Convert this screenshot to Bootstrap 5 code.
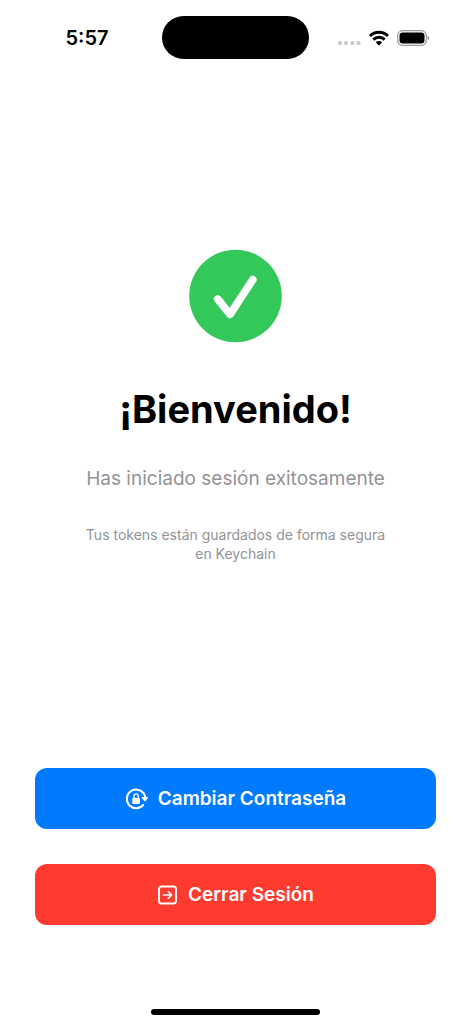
<!DOCTYPE html>
<html lang="es">
<head>
<meta charset="utf-8">
<meta name="viewport" content="width=device-width, initial-scale=1">
<title>Bienvenido</title>
<link href="https://cdn.jsdelivr.net/npm/bootstrap@5.3.0/dist/css/bootstrap.min.css" rel="stylesheet">
<style>
  body { font-family: Inter, "Liberation Sans", sans-serif; background: #fff; color: #000; }
  .status-bar { display: grid; grid-template-columns: 1fr 147px 1fr; padding-top: 16px; }
  .status-time { font-size: 20px; line-height: 24px; font-weight: 600; padding-right: 12px; padding-left: 24px; }
  .island { height: 43px; border-radius: 22px; background: #000; }
  .status-icons { gap: 8px; padding-left: 28px; }
  .welcome { padding: 0 80px; }
  .welcome-title { font-size: 38px; line-height: 48px; font-weight: 700; margin: 42px 0 34px; white-space: nowrap; }
  .welcome-lead { font-size: 19px; line-height: 24px; margin-bottom: 34px; white-space: nowrap; }
  .welcome-note { font-size: 14px; line-height: 19px; }
  .welcome-lead, .welcome-note { color: #939398; }
  .actions { gap: 35px; padding: 0 35px 84px; }
  .action-btn { --bs-btn-color: #fff; --bs-btn-hover-color: #fff; --bs-btn-active-color: #fff;
    --bs-btn-border-width: 0; --bs-btn-border-radius: 12px; --bs-btn-font-size: 19px; --bs-btn-font-weight: 600;
    --bs-btn-line-height: 24px; height: 61px; gap: 9px; }
  .action-change { --bs-btn-bg: #007aff; --bs-btn-hover-bg: #0070eb; --bs-btn-active-bg: #0066d6; }
  .action-logout { --bs-btn-bg: #ff3b30; --bs-btn-hover-bg: #eb362c; --bs-btn-active-bg: #d63128; }
  .home-bar { width: 36%; height: 6px; border-radius: 3px; background: #000; margin: 0 auto 9px; }
</style>
</head>
<body class="d-flex flex-column min-vh-100">

<header class="status-bar align-items-center">
  <div class="status-time text-center">5:57</div>
  <div class="island"></div>
  <div class="status-icons d-flex align-items-center">
    <svg width="24" height="14" viewBox="0 0 24 14" fill="#cbcbcc" aria-hidden="true">
      <rect x="1" y="10" width="4" height="4" rx="1.5"/><rect x="7" y="10" width="4" height="4" rx="1.5"/>
      <rect x="13.500" y="10" width="4" height="4" rx="1.5"/><rect x="19.500" y="10" width="4" height="4" rx="1.5"/>
    </svg>
    <svg width="20" height="16" viewBox="0 0 20 16" aria-label="Wi-Fi">
      <g fill="none" stroke="#000" stroke-width="2.900">
        <path d="M1 6a12.800 12.800 0 0 1 18 0"/>
        <path d="M4.300 9.600a8.100 8.100 0 0 1 11.400 0"/>
      </g>
      <path d="M6.800 12.300a4.600 4.600 0 0 1 6.400 0L10 15.700z"/>
    </svg>
    <svg width="33" height="16" viewBox="0 0 33 16" aria-label="Batería">
      <rect x=".7" y=".7" width="28.600" height="14.600" rx="4.800" fill="none" stroke="#999" stroke-width="1.200"/>
      <rect x="2.500" y="2.500" width="25" height="11" rx="3.200"/>
      <path d="M30.600 5.500c2 .8 2 4.200 0 5z" fill="#999"/>
    </svg>
  </div>
</header>

<main class="flex-grow-1 d-flex flex-column">
  <section class="welcome flex-grow-1 d-flex flex-column align-items-center justify-content-center text-center pb-3">
    <svg width="93" height="94" viewBox="0 0 94 94" aria-hidden="true">
      <circle cx="47" cy="47" r="46.800" fill="#34c759"/>
      <path d="M29 50 41.500 65.500 64.500 30.500" fill="none" stroke="#fff" stroke-width="7.800" stroke-linecap="round" stroke-linejoin="round"/>
    </svg>
    <h1 class="welcome-title">¡Bienvenido!</h1>
    <p class="welcome-lead">Has iniciado sesión exitosamente</p>
    <p class="welcome-note mb-0">Tus tokens están guardados de forma segura en Keychain</p>
  </section>

  <section class="actions d-flex flex-column">
    <button type="button" class="btn action-btn action-change d-flex align-items-center justify-content-center">
      <svg width="24" height="22" viewBox="0 0 24 22" aria-hidden="true">
        <path d="M18.700 5.500A9.300 9.300 0 1 0 18.200 17" fill="none" stroke="#fff" stroke-width="2" stroke-linecap="round"/>
        <path d="M18.300 4.800q1.600 2 1.900 4.400" fill="none" stroke="#fff" stroke-width="2"/>
        <path d="M16.800 9h6q.8 0 .3.700l-2.600 3.500q-.5.600-1 0l-2.900-3.500q-.5-.7.200-.7z" fill="#fff"/>
        <rect x="7.300" y="9.800" width="7.600" height="6.200" rx="1" fill="#fff"/>
        <path d="M8.900 10.200V8.300a2.200 2.500 0 0 1 4.400 0v1.900" fill="none" stroke="#fff" stroke-width="1.300"/>
      </svg>
      Cambiar Contraseña
    </button>
    <button type="button" class="btn action-btn action-logout d-flex align-items-center justify-content-center">
      <svg width="22" height="20" viewBox="0 0 22 20" aria-hidden="true" fill="none" stroke="#fff" stroke-linecap="round" stroke-linejoin="round">
        <rect x="2" y="1.500" width="17" height="17" rx="2.500" stroke-width="1.900"/>
        <path d="M6.300 10h8.200M11.300 6.600l3.400 3.400-3.400 3.400" stroke-width="1.600"/>
      </svg>
      Cerrar Sesión
    </button>
  </section>
</main>

<div class="home-bar"></div>

<script src="https://cdn.jsdelivr.net/npm/bootstrap@5.3.0/dist/js/bootstrap.bundle.min.js"></script>
</body>
</html>
